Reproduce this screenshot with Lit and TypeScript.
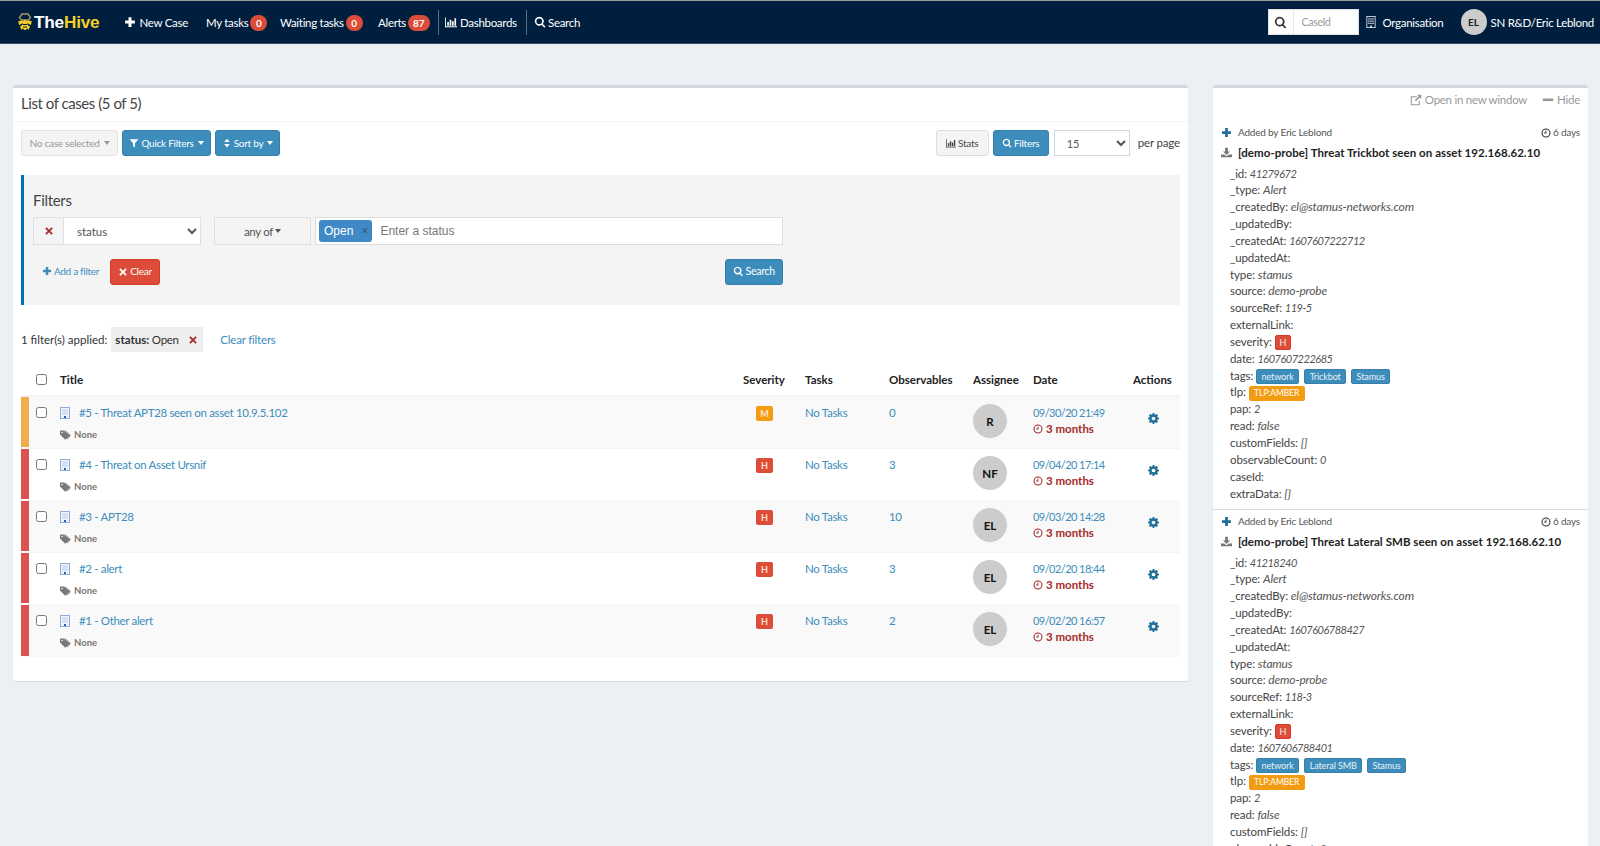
import { LitElement, html, css, svg } from "lit";
import { customElement } from "lit/decorators.js";

const P: Record<string, any> = {
  plus: svg`<path d="M6 1.500h4V6h4.500v4H10v4.500H6V10H1.500V6H6z"/>`,
  search: svg`<path fill-rule="evenodd" d="M7 1a6 6 0 0 1 4.800 9.600l3.400 3.400-1.500 1.500-3.400-3.400A6 6 0 1 1 7 1zm0 2.200a3.800 3.800 0 1 0 0 7.600 3.800 3.800 0 0 0 0-7.600z"/>`,
  chart: svg`<path d="M0 2h1.200v11.800H16V15H0z"/><path d="M3 8h2.200v5H3zM6.200 5h2.200v8H6.200zM9.400 7h2.200v6H9.400zM12.600 3h2.200v10h-2.200z"/>`,
  filter: svg`<path d="M1 2h14L9.600 8.200V15L6.400 12.600V8.200z"/>`,
  sort: svg`<path d="M8 1l4.500 5.500h-9zM8 15l-4.500-5.500h9z"/>`,
  times: svg`<path d="M4 2l4 4 4-4 2 2-4 4 4 4-2 2-4-4-4 4-2-2 4-4-4-4z"/>`,
  building: svg`<path fill-rule="evenodd" d="M2 0h12v16H2zM3 1v14h4v-2.500h2V15h4V1zM4.500 3h1.600v1.600H4.500zM7.200 3h1.600v1.600H7.200zM9.900 3h1.600v1.600H9.900zM4.500 6h1.600v1.600H4.500zM7.200 6h1.600v1.600H7.200zM9.900 6h1.600v1.600H9.900zM4.500 9h1.600v1.600H4.500zM7.200 9h1.600v1.600H7.200zM9.900 9h1.600v1.600H9.900z"/>`,
  tags: svg`<path d="M0 2.500V8l6.800 6.800c.5.500 1.200.500 1.700 0l4.300-4.300c.5-.5.5-1.200 0-1.700L6 2H.5zM3 4a1.200 1.200 0 1 1 0 2.400A1.200 1.200 0 0 1 3 4z" fill-rule="evenodd"/><path d="M8 2l6.900 6.800c.5.5.5 1.200 0 1.700L10.400 15l-1-1 4-4.300L7 2z"/>`,
  clock: svg`<path fill-rule="evenodd" d="M8 .8a7.200 7.200 0 1 1 0 14.400A7.200 7.200 0 0 1 8 .8zm0 1.700a5.500 5.500 0 1 0 0 11 5.500 5.500 0 0 0 0-11zM7.300 4h1.400v4.700H5V7.300h2.300z"/>`,
  cog: svg`<path fill-rule="evenodd" d="M6.800 0h2.400l.4 2.100 1.300.5L12.700 1.400l1.900 1.900-1.200 1.800.5 1.300 2.100.4v2.400l-2.100.4-.5 1.300 1.200 1.800-1.900 1.900-1.800-1.200-1.300.5-.4 2.100H6.800l-.4-2.100-1.300-.5-1.800 1.200-1.900-1.900 1.200-1.800-.5-1.300L0 9.200V6.800l2.100-.4.5-1.300L1.400 3.300l1.900-1.900 1.800 1.200 1.300-.5zM8 5.300a2.700 2.700 0 1 0 0 5.400 2.700 2.700 0 0 0 0-5.400z"/>`,
  download: svg`<path d="M6 1h4v5.500h3L8 11.500 3 6.500h3z"/><path d="M0 11h4.500L8 13.500 11.500 11H16v4H0z"/>`,
  external: svg`<path fill-rule="evenodd" d="M1 3h8v1.400H2.400v9.200h9.200V9H13v6H1z"/><path d="M9.500 1H15v5.500l-2-2-5 5L6.500 8l5-5z"/>`,
  minus: svg`<path d="M1 6h14v3.500H1z"/>`,
};
const icon = (n: string, cls = "") => html`<svg class="i ${cls}" viewBox="0 0 16 16" fill="currentColor">${P[n]}</svg>`;

const caseIcon = html`<svg class="ci" viewBox="0 0 10 12">
  <rect x=".5" y=".5" width="9" height="11" fill="#eef3fa" stroke="#8fb0d6"/>
  <path d="M2.500 2.500h1v1h-1zM4.500 2.500h1v1h-1zM6.500 2.500h1v1h-1zM2.500 4.500h1v1h-1zM4.500 4.500h1v1h-1zM6.500 4.500h1v1h-1zM2.500 6.500h1v1h-1zM4.500 6.500h1v1h-1zM6.500 6.500h1v1h-1z" fill="#8fb0d6"/>
  <rect x="4" y="9" width="2" height="2" fill="#1f5fb0"/>
</svg>`;

const cases = [
  { t: "#5 - Threat APT28 seen on asset 10.9.5.102", s: "M", obs: "0", who: "R", d: "09/30/20 21:49" },
  { t: "#4 - Threat on Asset Ursnif", s: "H", obs: "3", who: "NF", d: "09/04/20 17:14" },
  { t: "#3 - APT28", s: "H", obs: "10", who: "EL", d: "09/03/20 14:28" },
  { t: "#2 - alert", s: "H", obs: "3", who: "EL", d: "09/02/20 18:44" },
  { t: "#1 - Other alert", s: "H", obs: "2", who: "EL", d: "09/02/20 16:57" },
];

const alerts = [
  { title: "[demo-probe] Threat Trickbot seen on asset 192.168.62.10", id: "41279672", created: "1607607222712", ref: "119-5", date: "1607607222685", tags: ["network", "Trickbot", "Stamus"] },
  { title: "[demo-probe] Threat Lateral SMB seen on asset 192.168.62.10", id: "41218240", created: "1607606788427", ref: "118-3", date: "1607606788401", tags: ["network", "Lateral SMB", "Stamus"] },
];

@customElement("app-root")
export class AppRoot extends LitElement {
  static styles = css`
    :host { display: block; height: 846px; overflow: hidden; background: #ecf0f5; color: #333; font: 11.500px/17px Lato, "Liberation Sans", sans-serif; letter-spacing: -0.3px; }
    * { box-sizing: border-box; }
    .i { width: 1em; height: 1em; flex: none; display: inline-block; vertical-align: -0.12em; }
    a { color: #3c8dbc; text-decoration: none; }
    nav { height: 44px; background: #001f3f; border-top: 1px solid #9a9a9a; border-bottom: 1px solid #3a4a68; display: flex; align-items: center; color: #fff; }
    .logo { margin-left: 18px; width: 107px; display: flex; align-items: center; gap: 2px; font: 700 17.200px/20px "Liberation Sans", Arial, sans-serif; letter-spacing: -0.2px; }
    .logo b { color: #f5cf29; }
    .logo svg { width: 14px; height: 18px; }
    .nitem { display: flex; align-items: center; gap: 2px; white-space: nowrap; }
    .nitem .i { font-size: 12px; }
    .new { gap: 4px; width: 81px; }
    .new .i { margin-left: -1.500px; }
    .tasks { width: 74px; } .wait { width: 98px; }
    .nbadge { background: #dd4b39; color: #fff; font-size: 10px; font-weight: 700; line-height: 16px; height: 16px; min-width: 17px; padding: 0 5px; border-radius: 8px; text-align: center; margin-top: 2px; letter-spacing: 0; }
    .alerts { width: 60px; }
    .sep { align-self: center; height: 25px; border-left: 1px solid #5d6d85; }
    .dash { margin: 0 6px 0 6px; gap: 3px; width: 75px; }
    .srch { margin-left: 7px; gap: 2px; }
    .spacer { flex: 1; }
    .caseid { width: 91px; height: 26px; background: #fff; display: flex; align-items: stretch; color: #999; font-size: 10.500px; margin-right: 6px; border: 1px solid #e0e0e0; }
    .caseid span { width: 25px; display: flex; align-items: center; justify-content: center; color: #333; background: #fff; border-right: 1px solid #e8e8e8; }
    .caseid span .i { font-size: 13px; }
    .caseid em { font-style: normal; padding: 4px 0 0 8px; }
    .org { gap: 6px; width: 96px; }
    .org .i { font-size: 12px; }
    .me { gap: 4px; margin-right: 6px; }
    .ava { width: 26px; height: 26px; background: #ccc; color: #222; font-weight: 700; font-size: 10px; border-radius: 50%; display: flex; align-items: center; justify-content: center; letter-spacing: 0; }

    main { display: flex; align-items: flex-start; gap: 25px; padding: 41px 12px 0 13px; }
    .box { background: #fff; border-top: 3px solid #d2d6de; border-radius: 3px; box-shadow: 0 1px 1px rgba(0,0,0,.1); }
    .left { width: 1175px; height: 596px; flex: none; padding-bottom: 24px; }
    .right { width: 375px; flex: none; }
    .bh { height: 34px; padding: 4px 8px 0; font-size: 15px; line-height: 22px; letter-spacing: -0.45px; color: #444; border-bottom: 1px solid #f4f4f4; }
    .tools { display: flex; align-items: flex-start; gap: 4px; padding: 8px 8px 0; height: 53px; }
    .btn { display: inline-flex; align-items: center; justify-content: center; gap: 2px; height: 26px; padding: 0 6px; font-size: 10px; letter-spacing: -0.25px; border-radius: 3px; border: 1px solid #367fa9; background: #3c8dbc; color: #fff; white-space: nowrap; }
    .btn.gray { background: #f4f4f4; border-color: #e3e3e3; color: #999; }
    .btn.stats { background: #f4f4f4; border-color: #ddd; color: #444; }
    .btn.red { background: #dd4b39; border-color: #d73925; }
    .w97 { width: 97px; } .w89 { width: 89px; } .w65 { width: 65px; } .w53 { width: 53px; } .w56 { width: 56px; }
    .caret { width: 0; height: 0; border-top: 4px solid currentColor; border-left: 3.500px solid transparent; border-right: 3.500px solid transparent; margin-left: 2px; }
    .grow { flex: 1; }
    select { font: inherit; color: #555; background: #fff; border: 1px solid #d2d6de; padding: 0 8px; font-size: 11px; }
    .perpage { width: 76px; height: 26px; margin-left: 1px; }
    .pp { margin-left: 4px; color: #444; line-height: 26px; letter-spacing: -0.15px; }
    .filters { margin: 0 8px; height: 130px; background: #f4f4f4; border-left: 3px solid #0073b7; padding: 15px 0 0 9px; }
    .filters h4 { margin: 0 0 7px; font-weight: 400; font-size: 15px; line-height: 20px; color: #444; }
    .frow { display: flex; align-items: stretch; height: 28px; }
    .del { width: 30px; background: #f4f4f4; border: 1px solid #e0e0e0; border-right: 0; display: flex; align-items: center; justify-content: center; color: #a52a2a; font-size: 10px; }
    .frow select { width: 138px; border-color: #e0e0e0; padding-left: 9px; font-size: 11.500px; }
    .any { width: 97px; margin-left: 13px; border: 1px solid #e0e0e0; display: flex; align-items: center; justify-content: center; color: #555; }
    .tagin { width: 468px; margin-left: 4px; background: #fff; border: 1px solid #ddd; display: flex; align-items: center; padding-left: 3px; font: 12px "Liberation Sans", Arial, sans-serif; letter-spacing: 0; color: #777; }
    .tag { display: inline-flex; align-items: center; gap: 8px; background: #3f8ac6; color: #fff; border-radius: 3px; height: 22px; padding: 0 4px 0 5px; margin-right: 8px; }
    .tag i { font-style: normal; color: #33557a; font-size: 12px; }
    .frow2 { display: flex; align-items: center; height: 25px; margin-top: 14px; width: 750px; font-size: 10px; letter-spacing: -0.3px; }
    .add { margin-left: 9px; width: 68px; }
    .clear { width: 50px; padding: 0; height: 26px; }
    .fs { width: 58px; padding: 0; height: 26px; margin-left: auto; font-size: 10.500px; }
    .applied { display: flex; align-items: center; height: 25px; margin: 22px 8px 0; letter-spacing: 0; }
    .chip { background: #eee; height: 25px; display: flex; align-items: center; padding: 0 4px 0 4px; margin-left: 4px; width: 92px; letter-spacing: -0.3px; }
    .chip b { letter-spacing: 0; }
    .chip .i { color: #a52a2a; font-size: 10px; margin-left: auto; margin-right: 1px; }
    .clr { margin-left: 17px; letter-spacing: -0.2px; }
    .tbl { margin: 14px 8px 0; }
    .tr { display: grid; grid-template-columns: 8px 31px 683px 62px 84px 84px 60px 100px 47px; }
    .th { height: 30px; font-weight: 700; color: #222; align-items: center; letter-spacing: 0; border-bottom: 1px solid #f4f4f4; padding-bottom: 2px; }
    .th input, .row input { margin: 0 0 0 7px; width: 11px; height: 11px; }
    .row { height: 52px; border-top: 1px solid #f4f4f4; }
    .row:last-child { height: 53px; }
    .row:nth-child(even) { background: #f9f9f9; }
    .row > div { padding-top: 7px; }
    .row > .stripe { padding: 0; background: #d9534f; margin-bottom: 1px; }
    .row > .stripe.M { background: #f0ad4e; }
    .row input { margin-top: 3px; }
    .ct { display: flex; gap: 9px; align-items: center; color: #3c8dbc; letter-spacing: -0.33px; }
    .ci { width: 10px; height: 12px; flex: none; }
    .none { margin-top: 5px; font-size: 9.500px; font-weight: 700; color: #777; display: flex; align-items: center; gap: 3px; letter-spacing: 0; }
    .none .i { font-size: 11px; }
    .sev { display: inline-block; margin: 2px 0 0 13px; width: 17px; height: 15px; line-height: 15px; text-align: center; color: #ffe3d0; font-size: 9px; font-weight: 700; background: #dd4b39; border-radius: 2px; letter-spacing: 0; }
    .sev.M { background: #f39c12; }
    .big { width: 34px; height: 34px; border-radius: 50%; background: #ccc; color: #111; font-weight: 700; font-size: 11.500px; display: flex; align-items: center; justify-content: center; letter-spacing: 0; }
    .dt { font-size: 11px; letter-spacing: -0.55px; }
    .ago { color: #a52a2a; font-weight: 700; display: flex; align-items: center; gap: 3px; line-height: 16px; letter-spacing: 0; }
    .ago .i { font-size: 10px; }
    .act { color: #206f96; font-size: 11px; padding-left: 15px; }
    .act .i { margin-top: 9px; display: block; }

    .rh { display: flex; justify-content: flex-end; align-items: flex-start; gap: 15px; color: #999; padding: 3px 8px 0; height: 31px; line-height: 18px; letter-spacing: -0.27px; }
    .rh span { display: flex; align-items: center; gap: 3px; }
    .rh .i { font-size: 12px; }
    .al { padding: 5px 8px 0 8px; border-bottom: 1px solid #d9d9d9; height: 391px; }
    .al + .al { border: 0; padding-top: 3px; height: auto; }
    .ah { display: flex; align-items: center; font-size: 10px; color: #555; height: 17px; letter-spacing: -0.2px; }
    .ah .pl { color: #206f96; font-size: 11px; margin-right: 6px; }
    .ah .ti { margin-left: auto; display: flex; align-items: center; gap: 2px; }
    .ah .ti .i { font-size: 10px; color: #333; }
    .at { display: flex; align-items: center; gap: 6px; font-weight: 700; color: #222; margin-top: 1px; height: 20px; letter-spacing: 0.05px; }
    .at .i { font-size: 11px; color: #777; }
    .fl { margin: 2.500px 0 0 9px; color: #444; letter-spacing: -0.1px; }
    .fl div { height: 16.850px; line-height: 17px; white-space: nowrap; }
    .fl em { color: #555; font-size: 12px; letter-spacing: -0.18px; }
    .fl em.num { font-size: 11px; letter-spacing: -0.5px; }
    .lb { display: inline-block; background: #3c8dbc; border: 1px solid #367fa9; color: #e8f1f6; border-radius: 2px; font-size: 9px; line-height: 13px; padding: 0 4.500px; margin-right: 2px; letter-spacing: -0.1px; }
    .lb.o { background: #f39c12; border-color: #f39c12; color: #fff; font-size: 8.500px; }
    .lb.r { background: #dd4b39; border-color: #d73925; padding: 0 4px; }
  `;

  renderField(k: string, v: unknown) {
    if (typeof v === "string") {
      return html`<div>${k}: <em class=${/^\d/.test(v) ? "num" : ""}>${v}</em></div>`;
    }
    return html`<div>${k}: ${v}</div>`;
  }

  renderAlert(a: (typeof alerts)[number]) {
    const f = (k: string, v: unknown) => this.renderField(k, v);
    return html`<div class="al">
      <div class="ah">${icon("plus", "pl")}Added by Eric Leblond<span class="ti">${icon("clock")} 6 days</span></div>
      <div class="at">${icon("download")}<span>${a.title}</span></div>
      <div class="fl">
        ${f("_id", a.id)}${f("_type", "Alert")}${f("_createdBy", "el@stamus-networks.com")}${f("_updatedBy", "")}
        ${f("_createdAt", a.created)}${f("_updatedAt", "")}${f("type", "stamus")}${f("source", "demo-probe")}
        ${f("sourceRef", a.ref)}${f("externalLink", "")}
        ${f("severity", html`<span class="lb r">H</span>`)}
        ${f("date", a.date)}
        ${f("tags", a.tags.map((t) => html`<span class="lb">${t}</span> `))}
        ${f("tlp", html`<span class="lb o">TLP:AMBER</span>`)}
        ${f("pap", "2")}${f("read", "false")}${f("customFields", "[]")}${f("observableCount", "0")}${f("caseId", "")}${f("extraData", "{}")}
      </div>
    </div>`;
  }

  render() {
    return html`
      <nav>
        <div class="logo">
          <svg viewBox="0 0 14 18"><path d="M4 1h6l2.500 3.500L10.500 7h-7L1.500 4.500z" fill="none" stroke="#a89a60" stroke-width="1.300"/><path d="M5 7.500L.3 8l.7 4 4-2zM9 7.500l4.700.5-.7 4-4-2zM5 11.500L2 13.500 3.500 17 6 14zM9 11.500l3 2-1.500 3.500L8 14z" fill="#f5cf29"/><ellipse cx="7" cy="12" rx="2.400" ry="5" fill="#f5cf29"/><path d="M4.800 11h4.400v1H4.800zM5 13.500h4v1H5z" fill="#001f3f"/></svg>
          <span>The<b>Hive</b></span>
        </div>
        <div class="nitem new">${icon("plus")}New Case</div>
        <div class="nitem tasks">My tasks <span class="nbadge">0</span></div>
        <div class="nitem wait">Waiting tasks <span class="nbadge">0</span></div>
        <div class="nitem alerts">Alerts <span class="nbadge">87</span></div>
        <span class="sep"></span>
        <div class="nitem dash">${icon("chart")}Dashboards</div>
        <span class="sep"></span>
        <div class="nitem srch">${icon("search")}Search</div>
        <div class="spacer"></div>
        <div class="caseid"><span>${icon("search")}</span><em>CaseId</em></div>
        <div class="nitem org">${icon("building")}Organisation</div>
        <div class="nitem me"><span class="ava">EL</span>SN R&amp;D/Eric Leblond</div>
      </nav>
      <main>
        <section class="box left">
          <div class="bh">List of cases (5 of 5)</div>
          <div class="tools">
            <span class="btn gray w97">No case selected<span class="caret"></span></span>
            <span class="btn w89">${icon("filter")}Quick Filters<span class="caret"></span></span>
            <span class="btn w65">${icon("sort")}Sort by<span class="caret"></span></span>
            <span class="grow"></span>
            <span class="btn stats w53">${icon("chart")} Stats</span>
            <span class="btn w56">${icon("search")} Filters</span>
            <select class="perpage"><option>15</option></select>
            <span class="pp">per page</span>
          </div>
          <div class="filters">
            <h4>Filters</h4>
            <div class="frow">
              <span class="del">${icon("times")}</span>
              <select><option>status</option></select>
              <span class="any">any of<span class="caret"></span></span>
              <div class="tagin"><span class="tag">Open <i>×</i></span>Enter a status</div>
            </div>
            <div class="frow2">
              <a class="add">${icon("plus")} Add a filter</a>
              <span class="btn red clear">${icon("times")}Clear</span>
              <span class="btn fs">${icon("search")}Search</span>
            </div>
          </div>
          <div class="applied">1 filter(s) applied:
            <span class="chip"><b>status:</b>&nbsp;Open ${icon("times")}</span>
            <a class="clr">Clear filters</a>
          </div>
          <div class="tbl">
            <div class="tr th">
              <span></span><input type="checkbox" /><span>Title</span><span>Severity</span><span>Tasks</span><span>Observables</span><span>Assignee</span><span>Date</span><span>Actions</span>
            </div>
            ${cases.map((c) => html`
              <div class="tr row">
                <div class="stripe ${c.s}"></div>
                <div><input type="checkbox" /></div>
                <div>
                  <div class="ct">${caseIcon}<a>${c.t}</a></div>
                  <div class="none">${icon("tags")}None</div>
                </div>
                <div><span class="sev ${c.s}">${c.s}</span></div>
                <div><a>No Tasks</a></div>
                <div><a>${c.obs}</a></div>
                <div><span class="big">${c.who}</span></div>
                <div><a class="dt">${c.d}</a><div class="ago">${icon("clock")}3 months</div></div>
                <div class="act">${icon("cog")}</div>
              </div>`)}
          </div>
        </section>
        <aside class="box right">
          <div class="rh"><span>${icon("external")}Open in new window</span><span>${icon("minus")}Hide</span></div>
          ${alerts.map((a) => this.renderAlert(a))}
        </aside>
      </main>
    `;
  }
}
